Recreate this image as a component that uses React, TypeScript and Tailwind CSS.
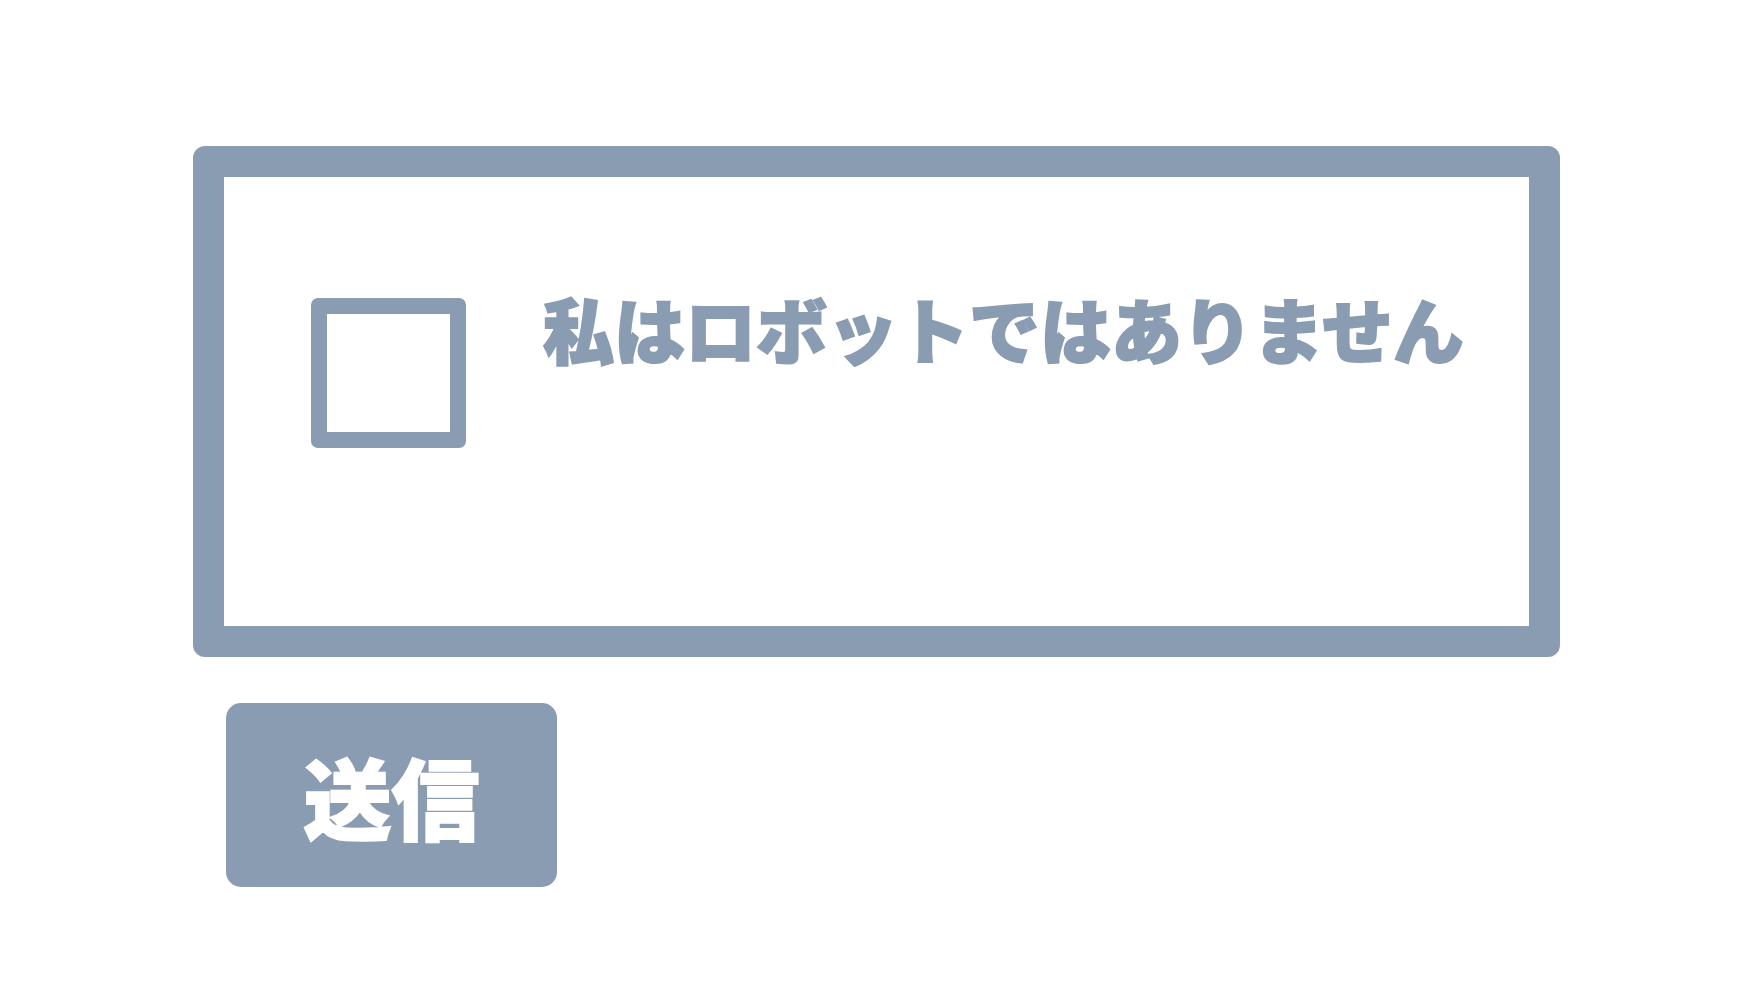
export default function App() {
  return (
    <div
      className="min-h-screen bg-white pt-[146px] pl-[193px]"
      style={{ fontFamily: '"Noto Sans CJK JP", "Noto Sans", sans-serif' }}
    >
      {/* captcha box */}
      <div className="w-[1367px] h-[511px] border-[31px] border-[#8a9cb2] rounded-[12px] pt-[121px] pl-[87px] flex items-start gap-[77px]">
        <div className="w-[155px] h-[150px] shrink-0 border-[16px] border-[#8a9cb2] rounded-[7px]" />
        <span className="text-[71px] leading-none font-black text-[#8a9cb2] -mt-[6px] [-webkit-text-stroke:2px_#8a9cb2]">
          私はロボットではありません
        </span>
      </div>

      <button className="mt-[46px] ml-[33px] w-[331px] h-[184px] rounded-[15px] bg-[#8a9cb2] text-white text-[88px] font-black leading-none flex items-center justify-center [-webkit-text-stroke:2px_white]">
        送信
      </button>
    </div>
  );
}
